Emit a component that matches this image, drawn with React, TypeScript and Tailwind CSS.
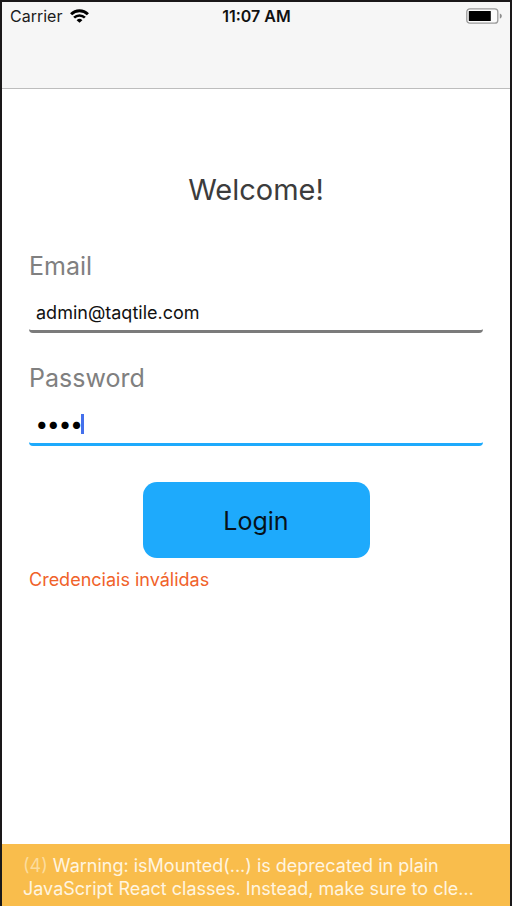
import { useState } from "react";

function WifiIcon() {
  return (
    <svg width="19" height="14" viewBox="0 0 19 14" fill="none" aria-hidden="true">
      <path d="M1.1 5.2a12 12 0 0 1 16.8 0" stroke="#000" strokeWidth="3" />
      <path d="M4.1 8.7a7.6 7.6 0 0 1 10.8 0" stroke="#000" strokeWidth="2.6" />
      <path d="M9.5 13.8 6.6 11.2a4.2 4.2 0 0 1 5.8 0z" fill="#000" />
    </svg>
  );
}

function BatteryIcon() {
  return (
    <svg width="37" height="16" viewBox="0 0 37 16" aria-hidden="true">
      <rect x="0.8" y="0.8" width="31" height="14.4" rx="3" fill="#fbfbfb" stroke="#9a9a9a" strokeWidth="1.3" />
      <rect x="2.8" y="3" width="22" height="10" rx="0.5" fill="#000" />
      <path d="M33.8 5.4c1.4.4 2 1.4 2 2.6s-.6 2.2-2 2.6z" fill="#8e8e8e" />
    </svg>
  );
}

export default function App() {
  const [email, setEmail] = useState("admin@taqtile.com");
  const [password, setPassword] = useState("1234");

  return (
    <div className="flex min-h-screen flex-col border-x-2 border-t-2 border-[#1a1819] bg-white font-['Inter','Liberation_Sans',sans-serif]">
      <header className="h-[87px] border-b border-[#bdbdbd] bg-[#f6f6f6]">
        <div className="grid h-7 grid-cols-3 items-center pr-[7px] pl-2 text-base text-[#1c1c1c]">
          <div className="flex items-center gap-2">
            <span>Carrier</span>
            <WifiIcon />
          </div>
          <time className="text-center font-semibold text-[#111]">11:07 AM</time>
          <div className="flex justify-end">
            <BatteryIcon />
          </div>
        </div>
      </header>

      <main className="flex-1 px-[27px] pt-[81px]">
        <h1 className="text-center text-[29px] leading-10 text-[#3c3c3c]">Welcome!</h1>
        <form onSubmit={(e) => e.preventDefault()}>
          <label htmlFor="email" className="mt-9 block text-[25px] leading-10 text-[#808080]">
            Email
          </label>
          <input
            id="email"
            type="email"
            value={email}
            onChange={(e) => setEmail(e.target.value)}
            className="mt-[7px] block h-10 w-full rounded-b border-b-[3px] border-[#7b7b7b] px-[7px] pt-0.5 text-[18px] text-[#111] outline-none"
          />
          <label htmlFor="password" className="mt-[25px] block text-[25px] leading-10 text-[#808080]">
            Password
          </label>
          <div className="relative mt-2">
            <input
              id="password"
              type="password"
              value={password}
              onChange={(e) => setPassword(e.target.value)}
              className="block h-10 w-full rounded-b border-b-[3px] border-[#1eaafc] px-[7px] pb-0.5 text-[23px] font-semibold text-black caret-transparent outline-none"
            />
            <span className="absolute top-2 left-13 h-5 w-[3px] bg-[#4470ec]" />
          </div>
          <button
            type="submit"
            className="mx-auto mt-9 block h-[76px] w-[227px] rounded-[14px] bg-[#1eaafc] pt-1 text-[25px] text-[#06121a]"
          >
            Login
          </button>
          <p role="alert" className="mt-2 text-[18px] leading-7 text-[#f0622a]">
            Credenciais inválidas
          </p>
        </form>
      </main>

      <footer className="bg-[#f9bd4c] px-[21px] pt-2.5 pb-1.5 text-[18px] leading-[23px] text-[#fff5e0]">
        <p>
          <span className="text-[#fcdc9c]">(4)</span> Warning: isMounted(...) is deprecated in plain
        </p>
        <p className="whitespace-nowrap">JavaScript React classes. Instead, make sure to cle…</p>
      </footer>
    </div>
  );
}
